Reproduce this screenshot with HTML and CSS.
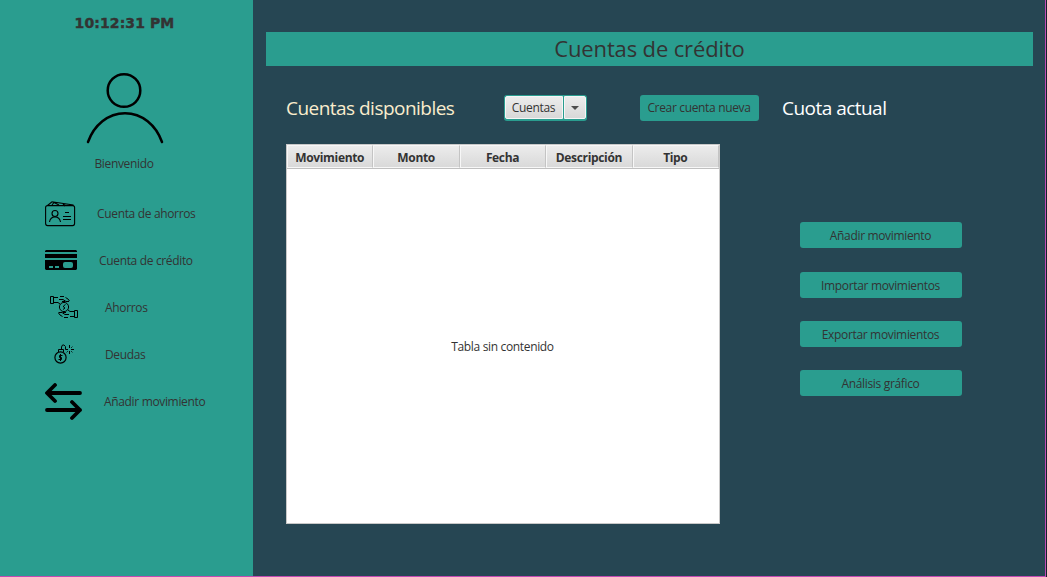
FILE: index.html
```html
<!DOCTYPE html>
<html lang="es">
<head>
<meta charset="utf-8">
<title>Cuentas de crédito</title>
<link rel="stylesheet" href="styles.css">
</head>
<body>
<div class="window">
  <aside class="sidebar">
    <div class="clock">10:12:31 PM</div>
    <svg class="avatar" width="78" height="74" viewBox="0 0 78 74" fill="none" stroke="#000" stroke-width="2.5" stroke-linecap="round"><circle cx="38" cy="18.500" r="16.300"/><path d="M2 70C8 53 22 41.200 39 41.200S70 53 76 70"/></svg>
    <div class="welcome">Bienvenido</div>
    <nav class="menu">
      <a class="item savings-account"><span class="icon"><svg width="31" height="26" viewBox="0 0 31 26" fill="none" stroke="#000" stroke-width="1.1"><rect x=".6" y="4.600" width="29" height="20" rx="2"/><path d="M2.500 4.500L7 .8L28 4V5M7 4L9 1.500L14 4M18 3L20 5"/><circle cx="10" cy="12.500" r="3"/><path d="M4.500 21C5 18 7 16 10 16S15 18 15.500 21"/><path d="M20 11.500H24M18 15.500H26M18 18.500H26"/></svg></span><span class="label">Cuenta de ahorros</span></a>
      <a class="item credit-account"><span class="icon"><svg width="32" height="20" viewBox="0 0 32 20"><path d="M1 0H31L32 1V2H0V1ZM0 4H32V8H0ZM0 10H32V19L31 20H1L0 19Z"/><path fill="#2a9d8f" d="M4 16H8V18H4ZM10 16H14V18H10Z"/><rect x="18" y="12" width="10" height="6" rx="2" fill="#2a9d8f"/></svg></span><span class="label">Cuenta de crédito</span></a>
      <a class="item savings"><span class="icon"><svg width="28" height="22" viewBox="0 0 28 22" fill="none" stroke="#000" stroke-width="1"><path d="M.5.500H3.500V7.500H.5ZM24.500 14.500H27.500V21.500H24.500Z"/><path d="M4 1.500H8M10 .5H14M15.500 1.500L18 3L19.500 5M4 6.500H8L10 8M9 3.500H13L16 5.500H19M12 5.500H15M24 20.500H20M18 21.500H14M12.500 20.500L10 19L8.500 17M24 15.500H20L18 14M19 18.500H15L12 16.500H8.500M16 16.500H13"/><circle cx="14" cy="11" r="4.600"/><path d="M15.500 8.500L13.500 10V11L15 12L13 13.500"/></svg></span><span class="label">Ahorros</span></a>
      <a class="item debts"><span class="icon"><svg width="20" height="20" viewBox="0 0 20 20" fill="none" stroke="#000"><circle cx="6.500" cy="13.500" r="5.600" stroke-width="1.200"/><path d="M4.500 8V5.500H9.500V8M7.500 5V3L8.500 1H10L11.500 2.500V5.500H14M15.500 1V4M15.500 7V10M17 5.500H20"/><path stroke-width=".7" d="M12.500 8.500L14 7M18.500 2.500L17 4M18.500 8.500L17 7"/><path d="M8.500 11.500H5.500V13.500H7.500V15.500H4.500M6.500 10V17"/></svg></span><span class="label">Deudas</span></a>
      <a class="item movement"><span class="icon"><svg width="38" height="38" viewBox="0 0 38 38" fill="none" stroke="#000" stroke-width="3.800" stroke-linecap="round" stroke-linejoin="round"><path d="M35 10H2.500M10 2L2 10L10 18M2 27H35M27 19L35 27L27 35"/></svg></span><span class="label">Añadir movimiento</span></a>
    </nav>
  </aside>
  <main class="content">
    <h1 class="banner"><span>Cuentas de crédito</span></h1>
    <div class="toolbar">
      <h2 class="heading available">Cuentas disponibles</h2>
      <div class="split"><span class="split-text">Cuentas</span><span class="split-arrow"><svg width="8" height="4" viewBox="0 0 8 4"><path d="M0 0H8L4 4Z" fill="#4d4d4d"/></svg></span></div>
      <button class="button create">Crear cuenta nueva</button>
      <h2 class="heading fee">Cuota actual</h2>
    </div>
    <div class="body">
      <section class="table">
        <div class="columns"><span class="column"><b>Movimiento</b></span><span class="column"><b>Monto</b></span><span class="column"><b>Fecha</b></span><span class="column"><b>Descripción</b></span><span class="column"><b>Tipo</b></span></div>
        <div class="empty"><span>Tabla sin contenido</span></div>
      </section>
      <div class="actions">
        <button class="button">Añadir movimiento</button>
        <button class="button import">Importar movimientos</button>
        <button class="button">Exportar movimientos</button>
        <button class="button">Análisis gráfico</button>
      </div>
    </div>
  </main>
</div>
</body>
</html>
```
FILE: styles.css
```css
* { box-sizing: border-box; }
body { margin: 0; background: #17202a; font-family: "Open Sans", "Noto Sans", sans-serif; font-size: 12px; letter-spacing: -0.34px; color: #333; }
.window { display: flex; width: 1046px; height: 577px; background: #264653; border-right: 1px solid #c14ab4; border-bottom: 1px solid #c14ab4; }
.sidebar { display: flex; flex-direction: column; align-items: center; flex: 0 0 253px; padding: 12px 5px 0 0; background: #2a9d8f; }
.clock { height: 22px; padding-left: 1px; line-height: 22px; font-family: "DejaVu Sans", sans-serif; font-weight: bold; font-size: 14px; letter-spacing: 0.1px; -webkit-text-stroke: 0.4px #333; white-space: nowrap; }
.avatar { margin: 38px 0 0 2px; }
.welcome { height: 16px; line-height: 16px; margin-top: 10px; }
.menu { align-self: stretch; margin-top: 18px; }
.item { display: flex; align-items: center; height: 47px; padding-left: 45px; }
.icon { display: flex; width: 52px; }
.credit-account .icon { width: 54px; }
.credit-account .icon svg { margin-bottom: 2px; }
.savings .icon { width: 60px; padding-left: 5px; }
.savings .icon svg { margin-bottom: 2px; }
.debts .icon { width: 60px; padding-left: 9px; }
.debts .icon svg { margin-bottom: 2px; }
.movement .icon { width: 59px; }
.label { white-space: nowrap; padding-bottom: 1px; }
.content { flex: 1; min-width: 0; padding: 32px 12px 0 13px; }
.banner { display: flex; align-items: center; justify-content: center; height: 34px; margin: 0; padding-bottom: 2px; background: #2a9d8f; font-size: 22px; font-weight: 400; letter-spacing: -0.14px; }
.toolbar { display: flex; align-items: center; height: 26px; margin: 29px 0 0 20px; }
.heading { margin: 0; font-size: 19px; line-height: 26px; font-weight: 400; letter-spacing: -0.53px; white-space: nowrap; color: #fff; }
.available { width: 218px; color: #faedcd; }
.split { display: flex; width: 83px; height: 26px; padding: 1px 1px 2px; border-radius: 3px; background: #2a9d8f; gap: 1px; }
.split-text, .split-arrow { display: flex; align-items: center; justify-content: center; border: 1px solid #f6f6f6; background: linear-gradient(#ececec, #d8d8d8); }
.split-text { width: 58px; padding-right: 1px; border-radius: 2px 0 0 2px; }
.split-arrow { flex: 1; border-radius: 0 2px 2px 0; }
.button { height: 26px; padding: 0 1px 0 0; border: 0; border-radius: 3px; background: #2a9d8f; color: #333; font: inherit; letter-spacing: inherit; white-space: nowrap; }
.create { width: 119px; margin: 0 23px 0 53px; padding: 0 1px 1px 0; }
.body { display: flex; margin: 23px 0 0 20px; }
.table { display: flex; flex-direction: column; width: 434px; height: 380px; border: 1px solid #c8c8c8; background: #fff; }
.columns { display: flex; height: 24px; border-bottom: 1px solid #c0c0c0; }
.column { display: flex; align-items: center; justify-content: center; flex: 1; padding: 2px 1px 0 0; border: 1px solid #f7f7f7; border-right-color: #c4c4c4; background: linear-gradient(#ececec, #d9d9d9); }
.empty { display: flex; align-items: center; justify-content: center; flex: 1; padding-right: 1px; }
.actions { display: flex; flex-direction: column; gap: 23px; width: 162px; margin: 78px 0 0 80px; }
.import { margin-top: 1px; }
```
